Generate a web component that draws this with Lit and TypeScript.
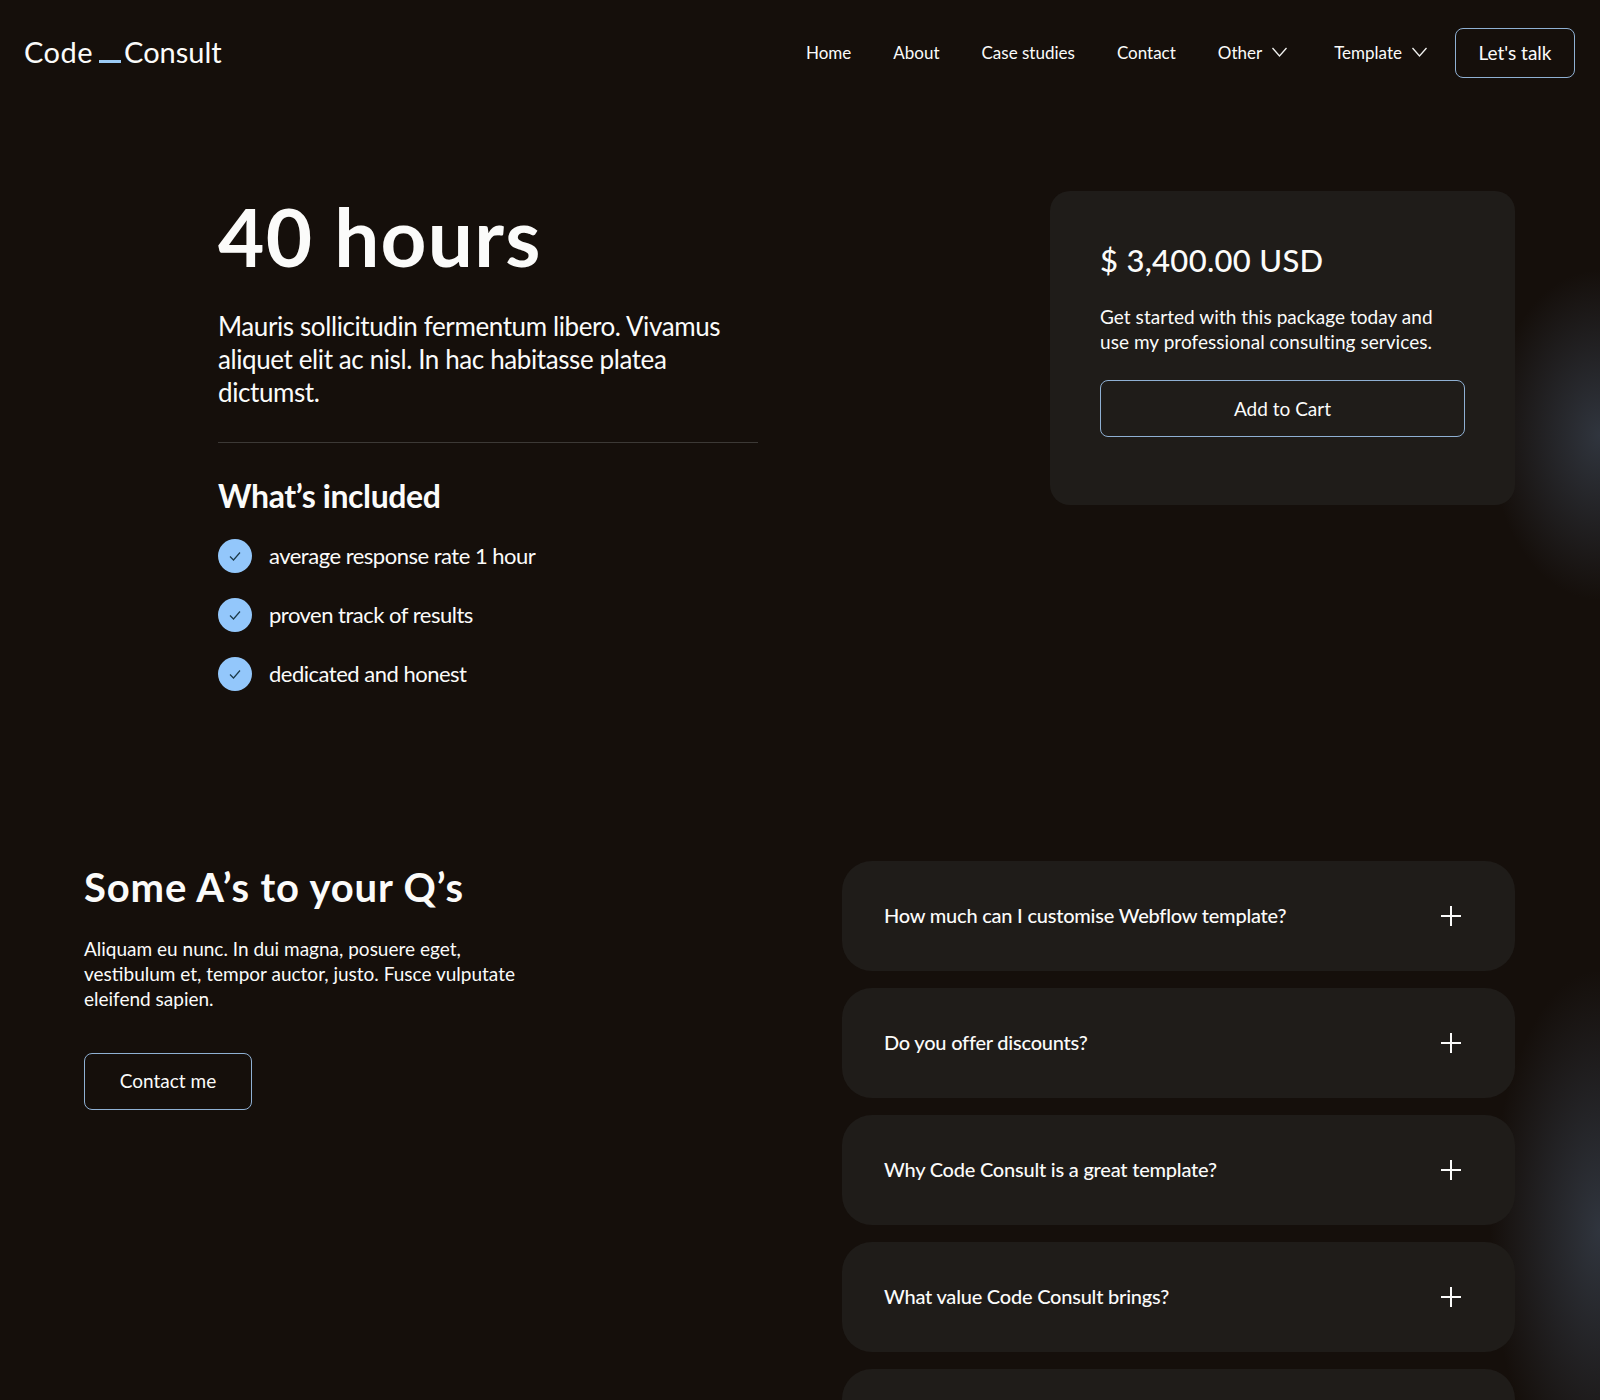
import { LitElement, html, css, svg } from 'lit';
import { customElement } from 'lit/decorators.js';

const included = ['average response rate 1 hour', 'proven track of results', 'dedicated and honest'];
const questions = [
  'How much can I customise Webflow template?',
  'Do you offer discounts?',
  'Why Code Consult is a great template?',
  'What value Code Consult brings?',
  '',
];

const chevron = svg`<path d="M.5 1 7.5 9l7-8" fill="none" stroke="#f2f2f0" stroke-width="1.3"/>`;

@customElement('app-root')
export class AppRoot extends LitElement {
  static styles = css`
    :host {
      display: block;
      position: relative;
      height: 1400px;
      overflow: hidden;
      background: #150f0b;
      color: #fbfbfa;
      font-family: Lato, "Liberation Sans", sans-serif;
    }
    .glow {
      position: absolute;
      right: -110px;
      width: 220px;
      background: radial-gradient(closest-side, rgb(48, 53, 62), rgba(48, 53, 62, 0));
    }
    .glow-top { top: 270px; height: 330px; }
    .glow-bottom { top: 970px; height: 520px; }

    .nav {
      position: relative;
      display: flex;
      align-items: center;
      height: 106px;
      padding: 0 25px 0 24px;
    }
    .logo {
      display: flex;
      align-items: center;
      padding-bottom: 3px;
      font-size: 29px;
      margin-right: auto;
    }
    .logo span { letter-spacing: 0.5px; }
    .logo i {
      width: 22px;
      height: 3px;
      margin: 19px 3px 0 6px;
      background: #9ccbf5;
    }
    .links {
      display: flex;
      align-items: center;
      gap: 42px;
      padding-bottom: 2px;
      font-size: 17px;
    }
    .links span { display: flex; align-items: center; gap: 10px; }
    .links span.other { margin-right: 5px; }
    .links svg { width: 15px; height: 10px; }
    .btn {
      display: flex;
      align-items: center;
      justify-content: center;
      box-sizing: border-box;
      padding-bottom: 2px;
      border: 1px solid #8fb0d3;
      border-radius: 8px;
      font-size: 19px;
    }
    .talk { width: 120px; height: 50px; margin-left: 28px; }

    .hero {
      position: relative;
      display: flex;
      justify-content: space-between;
      padding: 85px 85px 0 218px;
    }
    .info { width: 540px; }
    h1 {
      margin: 0;
      font-size: 80px;
      line-height: 90px;
      font-weight: 700;
      letter-spacing: 1.3px;
    }
    .lead {
      margin: 29px 0 0;
      font-size: 26px;
      line-height: 33px;
      letter-spacing: -0.4px;
    }
    .info hr {
      margin: 33px 0 0;
      border: 0;
      height: 1px;
      background: #3c3936;
    }
    h2 {
      margin: 32px 0 0;
      font-size: 32px;
      line-height: 42px;
      font-weight: 700;
      letter-spacing: -0.4px;
    }
    ul {
      display: flex;
      flex-direction: column;
      gap: 25px;
      margin: 22px 0 0;
      padding: 0;
      list-style: none;
    }
    li {
      display: flex;
      align-items: center;
      gap: 17px;
      font-size: 22px;
      line-height: 34px;
      letter-spacing: -0.5px;
    }
    .tick {
      display: flex;
      align-items: center;
      justify-content: center;
      width: 34px;
      height: 34px;
      border-radius: 50%;
      background: #93c7fb;
    }
    .tick svg { width: 14px; height: 14px; }

    .card {
      position: relative;
      width: 465px;
      height: 314px;
      box-sizing: border-box;
      padding: 49px 50px 50px;
      border-radius: 20px;
      background: #1f1c19;
    }
    .price {
      font-size: 31px;
      line-height: 40px;
      font-weight: 500;
      letter-spacing: 0.3px;
    }
    .desc {
      max-width: 340px;
      margin: 24px 0 0;
      font-size: 19px;
      line-height: 25px;
      letter-spacing: 0.05px;
    }
    .cart { height: 57px; margin-top: 26px; padding-bottom: 0; }

    .faq {
      position: relative;
      display: flex;
      justify-content: space-between;
      margin-top: 170px;
      padding: 0 85px 0 84px;
    }
    h3 {
      margin: 0;
      font-size: 40px;
      line-height: 52px;
      font-weight: 700;
      letter-spacing: 0.85px;
    }
    .faq-text {
      width: 440px;
      margin: 23px 0 0;
      font-size: 19px;
      line-height: 25px;
    }
    .contact { width: 168px; height: 57px; margin-top: 42px; }
    .questions {
      display: flex;
      flex-direction: column;
      gap: 17px;
      width: 673px;
    }
    .q {
      display: flex;
      align-items: center;
      justify-content: space-between;
      box-sizing: border-box;
      height: 110px;
      flex: none;
      padding: 0 54px 2px 42px;
      border-radius: 30px;
      background: #1f1c19;
      font-size: 20px;
      font-weight: 500;
      letter-spacing: -0.22px;
    }
    .q svg { width: 20px; height: 20px; margin-top: 2px; }
  `;

  render() {
    return html`
      <div class="glow glow-top"></div>
      <div class="glow glow-bottom"></div>
      <header class="nav">
        <div class="logo"><span>Code</span><i></i>Consult</div>
        <nav class="links">
          <span>Home</span>
          <span>About</span>
          <span>Case studies</span>
          <span>Contact</span>
          <span class="other">Other <svg viewBox="0 0 15 10">${chevron}</svg></span>
          <span>Template <svg viewBox="0 0 15 10">${chevron}</svg></span>
        </nav>
        <div class="btn talk">Let's talk</div>
      </header>

      <section class="hero">
        <div class="info">
          <h1>40 hours</h1>
          <p class="lead">Mauris sollicitudin fermentum libero. Vivamus aliquet elit ac nisl. In hac habitasse platea dictumst.</p>
          <hr />
          <h2>What’s included</h2>
          <ul>
            ${included.map(
              (t) => html`<li>
                <div class="tick">
                  <svg viewBox="0 0 14 14"><path d="M2 7.5 5.5 11 12 3.5" fill="none" stroke="#1d3b4a" stroke-width="1.2"/></svg>
                </div>
                ${t}
              </li>`
            )}
          </ul>
        </div>
        <aside class="card">
          <div class="price">$ 3,400.00 USD</div>
          <p class="desc">Get started with this package today and use my professional consulting services.</p>
          <div class="btn cart">Add to Cart</div>
        </aside>
      </section>

      <section class="faq">
        <div>
          <h3>Some A’s to your Q’s</h3>
          <p class="faq-text">Aliquam eu nunc. In dui magna, posuere eget, vestibulum et, tempor auctor, justo. Fusce vulputate eleifend sapien.</p>
          <div class="btn contact">Contact me</div>
        </div>
        <div class="questions">
          ${questions.map(
            (q) => html`<div class="q">
              <span>${q}</span>
              <svg viewBox="0 0 20 20"><path d="M10 0v20M0 10h20" stroke="#fbfbfa" stroke-width="2"/></svg>
            </div>`
          )}
        </div>
      </section>
    `;
  }
}
